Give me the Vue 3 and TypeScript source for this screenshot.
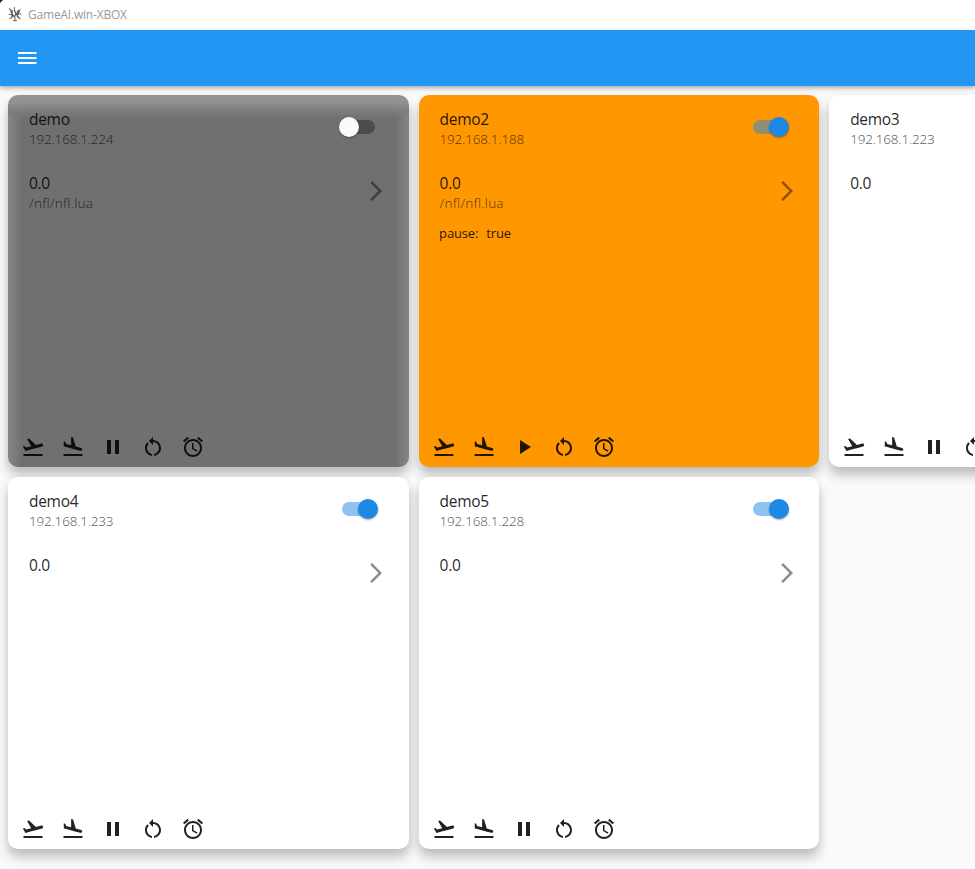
<script setup lang="ts">
interface Device {
  name: string
  ip: string
  score: string
  script?: string
  status?: string
  on: boolean
  paused?: boolean
  tone: 'offline' | 'warning' | 'plain'
}

const devices: Device[] = [
  { name: 'demo', ip: '192.168.1.224', score: '0.0', script: '/nfl/nfl.lua', on: false, tone: 'offline' },
  { name: 'demo2', ip: '192.168.1.188', score: '0.0', script: '/nfl/nfl.lua', status: 'true', on: true, paused: true, tone: 'warning' },
  { name: 'demo3', ip: '192.168.1.223', score: '0.0', on: true, tone: 'plain' },
  { name: 'demo4', ip: '192.168.1.233', score: '0.0', on: true, tone: 'plain' },
  { name: 'demo5', ip: '192.168.1.228', score: '0.0', on: true, tone: 'plain' },
]

const icons = {
  takeoff: 'M2.5 19h19v2h-19zM22.07 9.64c-.21-.8-1.04-1.28-1.84-1.06L14.92 10l-6.9-6.43-1.93.51 4.14 7.17-4.97 1.33-1.97-1.54-1.45.39 1.82 3.16.77 1.33 1.6-.43 5.31-1.42 4.35-1.16L21 11.49c.81-.23 1.28-1.05 1.07-1.85z',
  land: 'M2.5 19h19v2h-19zm7.18-5.73l4.35 1.16 5.31 1.42c.8.21 1.62-.26 1.84-1.06.21-.8-.26-1.62-1.06-1.84l-5.31-1.42-2.76-9.02L10.12 2v8.28L5.15 8.95l-.93-2.32-1.45-.39v5.17l1.6.43 5.31 1.43z',
  pause: 'M6 19h4V5H6v14zm8-14v14h4V5h-4z',
  play: 'M8 5v14l11-7z',
  restart: 'M12 5V2L8 6l4 4V7c3.31 0 6 2.69 6 6 0 2.97-2.17 5.43-5 5.91v2.02c3.95-.49 7-3.85 7-7.93 0-4.42-3.58-8-8-8zM6 13c0-1.65.67-3.15 1.76-4.24L6.34 7.34C4.9 8.79 4 10.79 4 13c0 4.08 3.05 7.44 7 7.93v-2.02c-2.83-.48-5-2.94-5-5.91z',
  alarm: 'M22 5.72l-4.6-3.86-1.29 1.53 4.6 3.86L22 5.72zM7.88 3.39L6.6 1.86 2 5.71l1.29 1.53 4.59-3.85zM12.5 8H11v6l4.75 2.85.75-1.23-4-2.37V8zM12 4c-4.97 0-9 4.03-9 9s4.02 9 9 9c4.97 0 9-4.03 9-9s-4.03-9-9-9zm0 16c-3.87 0-7-3.13-7-7s3.13-7 7-7 7 3.13 7 7-3.13 7-7 7z',
}

const actionsFor = (d: Device): string[] => [
  icons.takeoff,
  icons.land,
  d.paused ? icons.play : icons.pause,
  icons.restart,
  icons.alarm,
]
</script>

<template>
  <div class="window">
    <header class="titlebar">
      <svg class="logo" viewBox="0 0 14 16" fill="none">
        <path d="M6.500 1v4M7 11v4.500M1 2.500l3.500 3.500M12.500 3 9.500 6.500M.5 8.500H4M9.500 8h4M1.500 13 4.500 10.500M12.500 13 9.500 10.500M5 14.500h4" stroke="#777" stroke-width="1.1" />
        <path d="M4 4v7.500M2.500 5.500l3.500 5M10.500 4 8.500 8l2 4M6.500 4.500 8 8l-2 3.500M11.500 5 9 10.500" stroke="#555" stroke-width="1.200" />
        <path d="M7 7h1.500v2H7z" fill="#c44" />
      </svg>
      <span class="caption">GameAI.win-XBOX</span>
    </header>
    <nav class="appbar">
      <svg class="icon" viewBox="0 0 24 24"><path d="M3 18h18.500v-2H3v2zm0-5h18.500v-2H3v2zm0-7v2h18.500V6H3z" /></svg>
    </nav>
    <main class="grid">
      <article v-for="d in devices" :key="d.name" class="card" :class="d.tone">
        <section class="tile">
          <div class="text">
            <div class="title">{{ d.name }}</div>
            <div class="sub">{{ d.ip }}</div>
          </div>
          <span class="switch" :class="{ on: d.on }"><span class="thumb" /></span>
        </section>
        <section class="tile">
          <div class="text">
            <div class="title">{{ d.score }}</div>
            <div v-if="d.script" class="sub path">{{ d.script }}</div>
          </div>
          <svg class="icon chevron" viewBox="0 0 24 24"><path d="M6.230 20.230 8 22l10-10L8 2 6.230 3.770 14.460 12z" /></svg>
        </section>
        <div v-if="d.status" class="status"><span>pause:</span><span>{{ d.status }}</span></div>
        <footer class="actions">
          <svg v-for="(path, i) in actionsFor(d)" :key="i" class="icon" viewBox="0 0 24 24"><path :d="path" /></svg>
        </footer>
      </article>
    </main>
  </div>
</template>

<style>
body {
  margin: 0;
  overflow: hidden;
  background: #fafafa;
}
</style>

<style scoped>
.window {
  width: 100vw;
  height: 100vh;
  overflow: hidden;
  display: flex;
  flex-direction: column;
  background: #fafafa;
  font-family: "Open Sans", "Noto Sans", sans-serif;
  color: rgba(0, 0, 0, 0.87);
}
.titlebar {
  height: 30px;
  flex: none;
  display: flex;
  align-items: center;
  padding-left: 8px;
  box-sizing: border-box;
  background: radial-gradient(circle at 6px 6px, #fff 6px, #222 7px) 0 0 / 6px 6px no-repeat, #fff;
}
.logo {
  width: 14px;
  height: 16px;
  margin-top: -2px;
}
.caption {
  margin-left: 6px;
  font-size: 12px;
  line-height: 16px;
  letter-spacing: -0.2px;
  color: #999;
}
.appbar {
  height: 56px;
  flex: none;
  display: flex;
  align-items: center;
  padding-left: 15px;
  box-sizing: border-box;
  background: #2196f3;
  fill: #fff;
  z-index: 1;
  box-shadow: 0 2px 4px rgba(0, 0, 0, 0.26), 0 2px 8px rgba(0, 0, 0, 0.08);
}
.icon {
  width: 24px;
  height: 24px;
  flex: none;
}
.grid {
  display: grid;
  grid-template-columns: repeat(3, 400.600px);
  grid-auto-rows: 372px;
  gap: 10px;
  padding: 9px 8px;
}
.card {
  display: flex;
  flex-direction: column;
  box-sizing: border-box;
  padding: 8px 15px 8px 21px;
  border-radius: 10px;
  background: #fff;
  box-shadow: 0 8px 12px rgba(0, 0, 0, 0.24), 0 2px 10px rgba(0, 0, 0, 0.03);
}
.card.offline {
  background:
    linear-gradient(to bottom, #949494, #909090 8px, #7c7c7c 16px, rgba(112, 112, 112, 0) 23px),
    linear-gradient(to right, #868686, rgba(112, 112, 112, 0) 14px),
    linear-gradient(to left, #868686, rgba(112, 112, 112, 0) 14px),
    #707070;
}
.card.warning {
  background: #ff9800;
}
.tile {
  height: 64px;
  flex: none;
  display: flex;
  justify-content: space-between;
}
.text {
  padding-top: 6px;
}
.title {
  font-size: 15.500px;
  line-height: 20px;
  letter-spacing: -0.3px;
}
.sub {
  font-family: "Noto Sans", "Open Sans", sans-serif;
  font-size: 13.500px;
  line-height: 20px;
  font-weight: 300;
  letter-spacing: -0.2px;
  color: rgba(0, 0, 0, 0.66);
}
.path {
  letter-spacing: 0.2px;
}
.switch {
  width: 33px;
  height: 14px;
  margin: 17px 18.600px 0 0;
  display: flex;
  align-items: center;
  border-radius: 7px;
  background: rgba(0, 0, 0, 0.32);
}
.switch.on {
  justify-content: flex-end;
  background: rgba(30, 136, 229, 0.5);
}
.thumb {
  width: 20px;
  height: 20px;
  flex: none;
  margin: 0 -3px;
  border-radius: 50%;
  background: #fafafa;
  box-shadow: 0 1px 2px rgba(0, 0, 0, 0.35);
}
.switch.on .thumb {
  background: #1e88e5;
}
.chevron {
  margin: 12px 5.500px 0 0;
  fill: rgba(0, 0, 0, 0.45);
}
.status {
  display: flex;
  gap: 8px;
  margin: -8px 0 0 -0.5px;
  font-size: 13px;
  line-height: 20px;
  letter-spacing: -0.15px;
}
.actions {
  margin: auto 0 0 -8px;
  display: flex;
  gap: 16px;
  fill: rgba(0, 0, 0, 0.87);
}
</style>
